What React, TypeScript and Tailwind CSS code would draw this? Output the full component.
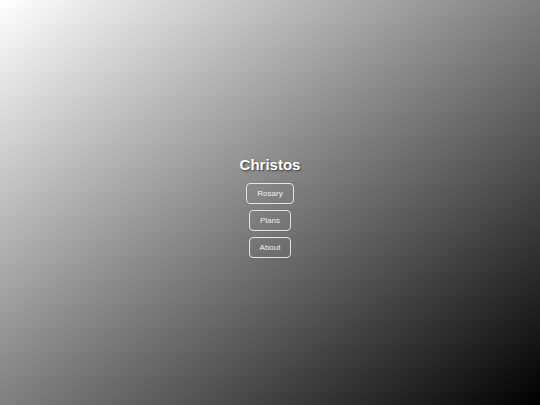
const links = ['Rosary', 'Plans', 'About'];

export default function App() {
  return (
    <div className="flex h-screen w-full flex-col items-center justify-center bg-[linear-gradient(to_bottom_right,#ffffff,#000000)] pt-[9px] font-['Liberation_Sans',Arial,sans-serif]">
      <h1 className="text-[15px] font-bold leading-[18px] text-white [text-shadow:1px_1px_2px_rgba(0,0,0,0.6)]">
        Christos
      </h1>
      <nav className="mt-[9px] flex flex-col items-center gap-[6px]">
        {links.map(label => (
          <button
            key={label}
            className="rounded-[4px] border border-[#e6e6e6] px-[10px] py-[5px] text-[8px] leading-[9px] text-[#f0f0f0] shadow-[0_0_1px_rgba(0,0,0,0.3)]"
          >
            {label}
          </button>
        ))}
      </nav>
    </div>
  );
}
